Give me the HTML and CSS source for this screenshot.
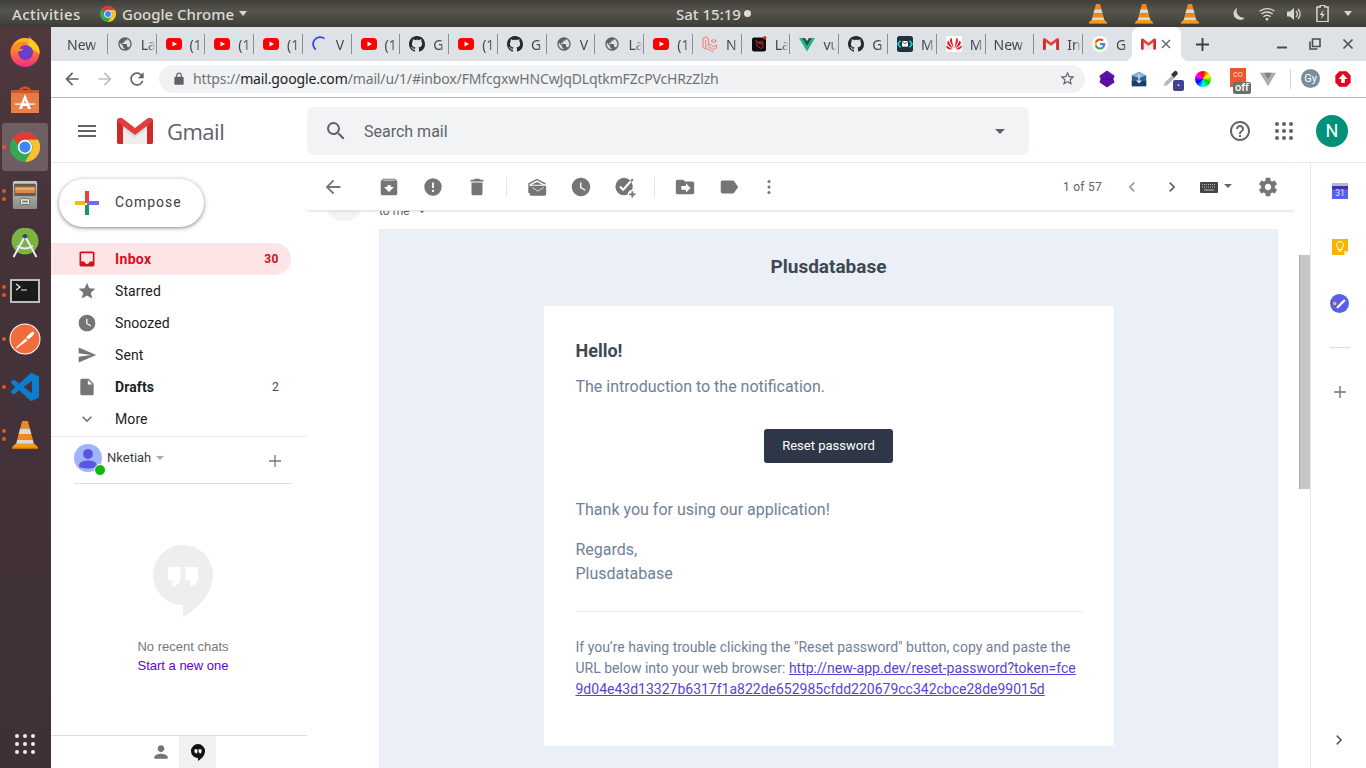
FILE: index.html
```html
<!DOCTYPE html>
<html lang="en">
<head>
<meta charset="utf-8">
<title>Inbox - Gmail</title>
<link rel="stylesheet" href="styles.css">
</head>
<body>
<svg class="sprite" xmlns="http://www.w3.org/2000/svg">
  <defs>
    <linearGradient id="ffbody" x1="0" y1="0" x2="0" y2="1"><stop offset="0" stop-color="#ffc21c"/><stop offset=".45" stop-color="#ff7a2a"/><stop offset="1" stop-color="#f2298a"/></linearGradient>
    <linearGradient id="bag" x1="0" y1="0" x2="0" y2="1"><stop offset="0" stop-color="#e5793f"/><stop offset="1" stop-color="#e9814a"/></linearGradient>
    <linearGradient id="cab" x1="0" y1="0" x2="0" y2="1"><stop offset="0" stop-color="#c9c9c4"/><stop offset="1" stop-color="#8b8b86"/></linearGradient>
  </defs>
  <symbol id="chrome" viewBox="0 0 48 48">
    <circle cx="24" cy="24" r="24" fill="#34a853"/>
    <path d="M44.8 12A24 24 0 0 1 24 48L34.4 30A12 12 0 0 0 24 12z" fill="#fbc02d"/>
    <path d="M24 0a24 24 0 0 1 20.8 12H24a12 12 0 0 0-11.3 8L4.6 9.9A24 24 0 0 1 24 0z" fill="#e53935"/>
    <circle cx="24" cy="24" r="11.5" fill="#fff"/><circle cx="24" cy="24" r="9" fill="#4285f4"/>
  </symbol>
  <symbol id="vlc" viewBox="0 0 30 32">
    <path d="M12 1h6l2.2 8H9.8z" fill="#f08a1d"/>
    <path d="M9.8 9h10.4l1.6 6H8.2z" fill="#d9d9d9"/>
    <path d="M8.2 15h13.6l1.6 6H6.6z" fill="#f08a1d"/>
    <path d="M6.6 21h16.8l1.2 5H5.4z" fill="#d9d9d9"/>
    <path d="M5.4 25h19.2l4 3.5v2.5H1.4v-2.5z" fill="#f39a1f"/>
    <path d="M1.4 29.5h27.2V31H1.4z" fill="#c96f10"/>
  </symbol>
  <symbol id="globe" viewBox="0 0 24 24"><path fill="#5f6368" d="M12 2C6.48 2 2 6.48 2 12s4.48 10 10 10 10-4.48 10-10S17.52 2 12 2zm-1 17.93c-3.95-.49-7-3.85-7-7.93 0-.62.08-1.21.21-1.79L9 15v1c0 1.1.9 2 2 2v1.93zm6.9-2.54c-.26-.81-1-1.39-1.9-1.39h-1v-3c0-.55-.45-1-1-1H8v-2h2c.55 0 1-.45 1-1V7h2c1.1 0 2-.9 2-2v-.41c2.93 1.19 5 4.06 5 7.41 0 2.08-.8 3.97-2.1 5.39z"/></symbol>
  <symbol id="yt" viewBox="0 0 16 16"><rect x="0" y="2" width="16" height="12" rx="3.5" fill="#f00"/><path d="M6.5 5.5v5L11 8z" fill="#fff"/></symbol>
  <symbol id="gh" viewBox="0 0 16 16"><path fill="#24292e" d="M8 0C3.58 0 0 3.58 0 8c0 3.54 2.29 6.53 5.47 7.59.4.07.55-.17.55-.38 0-.19-.01-.82-.01-1.49-2.01.37-2.53-.49-2.69-.94-.09-.23-.48-.94-.82-1.13-.28-.15-.68-.52-.01-.53.63-.01 1.08.58 1.23.82.72 1.21 1.87.87 2.33.66.07-.52.28-.87.51-1.07-1.78-.2-3.64-.89-3.64-3.95 0-.87.31-1.59.82-2.15-.08-.2-.36-1.02.08-2.12 0 0 .67-.21 2.2.82.64-.18 1.32-.27 2-.27.68 0 1.36.09 2 .27 1.53-1.04 2.2-.82 2.2-.82.44 1.1.16 1.92.08 2.12.51.56.82 1.27.82 2.15 0 3.07-1.87 3.75-3.65 3.95.29.25.54.73.54 1.48 0 1.07-.01 1.93-.01 2.2 0 .21.15.46.55.38A8.013 8.013 0 0 0 16 8c0-4.42-3.58-8-8-8z"/></symbol>
  <symbol id="laravel" viewBox="0 0 16 16"><path fill="none" stroke="#f0706a" stroke-width=".9" d="M1 2.5l2.7-1.5 2.7 1.5v8l5.3 3 2.8-1.6V9l-2.8 1.6L6.4 7.5M3.7 4V12l8 4M1 2.5v9l2.7 1.5M11.7 3.5l2.8 1.5-2.8 1.6L9 5z"/></symbol>
  <symbol id="laraveld" viewBox="0 0 16 16"><rect x="1" y="1.500" width="14" height="14" rx="2" fill="#0d0d0d"/><path fill="none" stroke="#c0282d" stroke-width="1" d="M4 4.500l2 1v4.500l4 2.500 2-1.200V7l-2 1.200L6 6M10 5l2 1.200-2 1.200-2-1.200z"/><circle cx="13.800" cy="1.800" r="1.800" fill="#ea2a2a"/></symbol>
  <symbol id="vue" viewBox="0 0 16 16"><path fill="#17b978" d="M0 2h3.200L8 10.200 12.800 2H16L8 15.500z"/><path fill="#27495a" d="M3.200 2h2.900L8 5.300 9.900 2h2.900L8 10.200z"/></symbol>
  <symbol id="mailapp" viewBox="0 0 16 16"><rect width="16" height="16" rx="2.500" fill="#20323f"/><path d="M5 5h6v5.600H5z" fill="#fff"/><path d="M5 5.400l3 2.400 3-2.400" fill="none" stroke="#20323f" stroke-width=".8"/><path d="M3.400 4.600L1 8l2.400 3.400M12.600 4.600L15 8l-2.400 3.400" fill="none" stroke="#19d4de" stroke-width="1.600"/></symbol>
  <symbol id="huawei" viewBox="0 0 16 16"><rect width="16" height="16" fill="#fff"/><g fill="#e3161f" transform="translate(-1.600 -2.200) scale(1.200)"><path d="M7.600 12.200L6 3.200c-1.600.6-1.700 2.800-.6 4.700z"/><path d="M8.400 12.200L10 3.200c1.600.6 1.700 2.800.6 4.700z"/><path d="M7 12.400L3.200 5.600c-1.500 1.400-.9 3.400 1 4.800z"/><path d="M9 12.400l3.800-6.800c1.500 1.400.9 3.400-1 4.800z"/><path d="M6.600 12.800L1.600 9.800c-.4 1.600 1 3 3 3.200z"/><path d="M9.400 12.800l5-3c.4 1.600-1 3-3 3.200z"/></g></symbol>
  <symbol id="gmail" viewBox="0 0 36 26">
    <path d="M6 8l12 9 12-9v18H6z" fill="#eeeeee"/>
    <path d="M18 17L6 8v3l12 9 12-9V8z" fill="#dcdcdc"/>
    <path d="M0 2.500A2.500 2.500 0 0 1 2.500 0H5l13 10L31 0h2.500A2.500 2.500 0 0 1 36 2.500V24a2 2 0 0 1-2 2h-4V8l-12 9L6 8v18H2a2 2 0 0 1-2-2z" fill="#e23d3a"/>
    <path d="M30 8l6-5.500V24a2 2 0 0 1-2 2h-4zM6 8L0 2.500V24a2 2 0 0 0 2 2h4z" fill="#cf2a2a"/>
  </symbol>
  <symbol id="google" viewBox="0 0 24 24"><circle cx="12" cy="12" r="12" fill="#fff"/><g transform="translate(3.600 3.600) scale(.35)"><path fill="#ea4335" d="M24 9.500c3.500 0 6.700 1.200 9.200 3.600l6.800-6.800C35.900 2.400 30.500 0 24 0 14.600 0 6.500 5.400 2.600 13.200l8 6.200C12.400 13.700 17.700 9.500 24 9.500z"/><path fill="#4285f4" d="M46.900 24.500c0-1.600-.1-3.100-.4-4.500H24v9h12.900c-.6 3-2.200 5.500-4.800 7.200l7.700 6c4.500-4.200 7.100-10.300 7.100-17.700z"/><path fill="#fbbc05" d="M10.500 28.600A14.500 14.500 0 0 1 10.500 19.400l-8-6.200A24 24 0 0 0 2.600 34.800z"/><path fill="#34a853" d="M24 48c6.500 0 11.900-2.100 15.900-5.800l-7.700-6c-2.200 1.400-4.900 2.300-8.200 2.300-6.300 0-11.600-4.200-13.500-9.900l-8 6.200C6.500 42.600 14.600 48 24 48z"/></g></symbol>
  <symbol id="spin" viewBox="0 0 16 16"><path d="M12.500 2.600A7 7 0 0 0 3.800 13.600" fill="none" stroke="#3b46e0" stroke-width="1.800"/></symbol>
  <symbol id="bubble" viewBox="0 0 60 72"><path d="M30 0a30 30 0 1 0 0 60v12c16-9 30-24 30-42A30 30 0 0 0 30 0z" fill="currentColor"/><path d="M15 22h12.500v11c0 4.500-3.500 8-8 8.500v-6H15zM32.500 22H45v11c0 4.500-3.500 8-8 8.500v-6h-4.500z" fill="#fff"/></symbol>
</svg>

<header class="topbar">
  <span class="tb-activities">Activities</span>
  <svg class="tb-chrome"><use href="#chrome"/></svg>
  <span class="tb-app">Google Chrome</span>
  <span class="tb-caret"></span>
  <span class="tb-clock">Sat 15:19</span>
  <span class="tb-dot"></span>
  <svg class="tb-cone tb-cone-first"><use href="#vlc"/></svg>
  <svg class="tb-cone"><use href="#vlc"/></svg>
  <svg class="tb-cone"><use href="#vlc"/></svg>
  <svg class="tb-moon" viewBox="0 0 16 16"><path d="M6 .8a7.300 7.300 0 1 0 8.600 11.400A8 8 0 0 1 6 .8z" fill="#d8d8d2"/></svg>
  <svg class="tb-wifi" viewBox="0 0 16 16"><path d="M8 15l-1.800-2.200a2.800 2.800 0 0 1 3.600 0z" fill="#e0e0da"/><path d="M4.400 10.800a5.600 5.600 0 0 1 7.200 0M2.400 8a8.800 8.800 0 0 1 11.200 0M.6 5.200a11.600 11.600 0 0 1 14.800 0" fill="none" stroke="#d8d8d2" stroke-width="1.300"/></svg>
  <svg class="tb-vol" viewBox="0 0 16 16"><path d="M1 5.500h3L8 2v12l-4-3.500H1z" fill="#d8d8d2"/><path d="M10 5a4 4 0 0 1 0 6M12 3a7 7 0 0 1 0 10" fill="none" stroke="#d8d8d2" stroke-width="1.300"/></svg>
  <svg class="tb-bat" viewBox="0 0 14 18"><path d="M4.500 0h5v2H13v16H1V2h3.500z" fill="none" stroke="#d8d8d2" stroke-width="1.600"/><path d="M8 5L4 10.500h2.500L5.500 15l4-5.500H7z" fill="#d8d8d2"/></svg>
  <span class="tb-caret tb-caret-end"></span>
</header>

<div class="desktop">
  <nav class="dock">
    <div class="dock-item">
      <svg class="d-31" viewBox="0 0 30 32"><circle cx="15" cy="17.500" r="14.500" fill="url(#ffbody)"/><path d="M19 0c1 4 5 6 8 10 2.500 3.500 2.800 7 2.500 9L17 10c3-2.500 3-6 2-10z" fill="#ffcb21"/><circle cx="15.500" cy="17.500" r="7.500" fill="#6b3ec6"/><path d="M3 12c3-4 7-5.500 12-5 2 .3 3 1 3 2.500-4-.5-7.500 1-8.500 4 1.500.5 3 .5 4 .5-.5 1.500-3 2.500-5.500 2.200C5.500 16 4 14.500 3 12z" fill="#ff8a1f"/></svg>
    </div>
    <div class="dock-item">
      <svg class="d-30" viewBox="0 0 30 30"><path d="M9 7c0-6 12-6 12 0v3h-2.500V7c0-3-7-3-7 0v3H9z" fill="#c9582a"/><path d="M1 6h28v23H1z" fill="url(#bag)"/><path d="M1 6h28v3H1z" fill="#c9582a"/><path d="M15 10l6 15h-3l-1-3h-4l-1 3H9zm0 6l-1.200 3.500h2.400z" fill="#fff"/><path d="M5 19.500h20v1.200H5z" fill="#fff"/></svg>
    </div>
    <div class="dock-item dock-active">
      <span class="dock-dots"><i></i></span>
      <svg class="d-30"><use href="#chrome"/></svg>
    </div>
    <div class="dock-item">
      <span class="dock-dots"><i></i><i></i></span>
      <svg class="d-28" viewBox="0 0 28 30"><rect x="1" y="0" width="26" height="30" rx="2" fill="url(#cab)"/><rect x="2.500" y="3" width="23" height="13" fill="#5a5a56"/><rect x="3.500" y="6" width="21" height="7" fill="#e2853f"/><path d="M3.500 8.500h21" stroke="#f7d7b8" stroke-width="1"/><rect x="9" y="19" width="10" height="6" rx="1" fill="#eee" stroke="#666"/><rect x="11" y="21" width="6" height="2" fill="#777"/></svg>
    </div>
    <div class="dock-item">
      <svg class="d-30" viewBox="0 0 30 30"><circle cx="15" cy="13" r="13.500" fill="#7cb342"/><circle cx="15" cy="8.500" r="2.500" fill="#37474f"/><path d="M14 10L3.500 29M16 10l10.500 19M7 18c5 3 11 3 16 0" fill="none" stroke="#eef" stroke-width="2"/></svg>
    </div>
    <div class="dock-item">
      <span class="dock-dots"><i></i><i></i></span>
      <svg class="d-30" viewBox="0 0 30 24"><rect width="30" height="24" fill="#bdbdb8"/><rect x="2" y="2" width="26" height="20" fill="#1b1b1b"/><path d="M6 5l4 3-4 3M11 11h6" fill="none" stroke="#eee" stroke-width="1.200"/></svg>
    </div>
    <div class="dock-item">
      <span class="dock-dots"><i></i></span>
      <svg class="d-32" viewBox="0 0 32 32"><circle cx="16" cy="16" r="15.500" fill="#fff"/><circle cx="16" cy="16" r="14.500" fill="#f26b3a"/><path d="M6.500 25l10-9.500 2 2-11 8zM17 14.500l5-5c2-2 4.500 0 2.500 2.500l-5 4.500z" fill="#fff"/></svg>
    </div>
    <div class="dock-item">
      <span class="dock-dots"><i></i></span>
      <svg class="d-28" viewBox="0 0 24 24"><path fill="#0a7fcf" d="M23.150 2.587L18.210.21a1.494 1.494 0 0 0-1.705.29l-9.460 8.630-4.120-3.128a.999.999 0 0 0-1.276.057L.327 7.261A1 1 0 0 0 .326 8.740L3.899 12 .326 15.260a1 1 0 0 0 .001 1.479L1.650 17.940a.999.999 0 0 0 1.276.057l4.120-3.128 9.460 8.630a1.492 1.492 0 0 0 1.704.29l4.942-2.377A1.500 1.500 0 0 0 24 20.060V3.939a1.500 1.500 0 0 0-.85-1.352zm-5.146 14.861L10.826 12l7.178-5.448v10.896z"/></svg>
    </div>
    <div class="dock-item">
      <span class="dock-dots"><i></i><i></i></span>
      <svg class="d-30"><use href="#vlc"/></svg>
    </div>
    <div class="dock-apps"><i></i><i></i><i></i><i></i><i></i><i></i><i></i><i></i><i></i></div>
  </nav>

  <div class="browser">
    <div class="tabstrip">
      <div class="tab tab-plain"><span class="tab-title tab-title-wide">New</span></div>
      <div class="tab"><svg class="fav"><use href="#globe"/></svg><span class="tab-title">La</span></div>
      <div class="tab"><svg class="fav"><use href="#yt"/></svg><span class="tab-title">(1</span></div>
      <div class="tab"><svg class="fav"><use href="#yt"/></svg><span class="tab-title">(1</span></div>
      <div class="tab"><svg class="fav"><use href="#yt"/></svg><span class="tab-title">(1</span></div>
      <div class="tab"><svg class="fav"><use href="#spin"/></svg><span class="tab-title">V</span></div>
      <div class="tab"><svg class="fav"><use href="#yt"/></svg><span class="tab-title">(1</span></div>
      <div class="tab"><svg class="fav"><use href="#gh"/></svg><span class="tab-title">G</span></div>
      <div class="tab"><svg class="fav"><use href="#yt"/></svg><span class="tab-title">(1</span></div>
      <div class="tab"><svg class="fav"><use href="#gh"/></svg><span class="tab-title">G</span></div>
      <div class="tab"><svg class="fav"><use href="#globe"/></svg><span class="tab-title">V</span></div>
      <div class="tab"><svg class="fav"><use href="#globe"/></svg><span class="tab-title">La</span></div>
      <div class="tab"><svg class="fav"><use href="#yt"/></svg><span class="tab-title">(1</span></div>
      <div class="tab"><svg class="fav"><use href="#laravel"/></svg><span class="tab-title">N</span></div>
      <div class="tab"><svg class="fav"><use href="#laraveld"/></svg><span class="tab-title">La</span></div>
      <div class="tab"><svg class="fav"><use href="#vue"/></svg><span class="tab-title">vu</span></div>
      <div class="tab"><svg class="fav"><use href="#gh"/></svg><span class="tab-title">G</span></div>
      <div class="tab"><svg class="fav"><use href="#mailapp"/></svg><span class="tab-title">M</span></div>
      <div class="tab"><svg class="fav"><use href="#huawei"/></svg><span class="tab-title">M</span></div>
      <div class="tab tab-plain"><span class="tab-title tab-title-wide">New</span></div>
      <div class="tab"><svg class="fav"><use href="#gmail"/></svg><span class="tab-title">In</span></div>
      <div class="tab tab-nosep"><svg class="fav"><use href="#google"/></svg><span class="tab-title">G</span></div>
      <div class="tab tab-active"><svg class="fav"><use href="#gmail"/></svg><svg class="tab-x" viewBox="0 0 10 10"><path d="M1 1l8 8M9 1L1 9" stroke="#5f6368" stroke-width="1.400"/></svg></div>
      <svg class="newtab" viewBox="0 0 14 14"><path d="M7 0v14M0 7h14" stroke="#3c4043" stroke-width="2"/></svg>
      <div class="winctl">
        <svg viewBox="0 0 12 12"><path d="M1 9.500h10" stroke="#4a4d52" stroke-width="2"/></svg>
        <svg viewBox="0 0 12 12"><path d="M3.500 1h7.500v7.500H3.500z M1 3.500v7.500h7.500" fill="none" stroke="#4a4d52" stroke-width="1.600"/></svg>
        <svg viewBox="0 0 12 12"><path d="M1.500 1.500l9 9M10.500 1.500l-9 9" stroke="#4a4d52" stroke-width="1.600"/></svg>
      </div>
    </div>

    <div class="toolbar">
      <svg class="nav-i" viewBox="0 0 24 24"><path fill="#5f6368" d="M20 11H7.830l5.590-5.590L12 4l-8 8 8 8 1.410-1.410L7.830 13H20v-2z"/></svg>
      <svg class="nav-i nav-fwd" viewBox="0 0 24 24"><path fill="#bcbec1" d="M12 4l-1.410 1.410L16.170 11H4v2h12.170l-5.580 5.590L12 20l8-8z"/></svg>
      <svg class="nav-i" viewBox="0 0 24 24"><path fill="#5f6368" d="M17.650 6.350A7.958 7.958 0 0 0 12 4c-4.420 0-7.990 3.580-7.990 8s3.570 8 7.990 8c3.730 0 6.840-2.550 7.730-6h-2.080A5.990 5.990 0 0 1 12 18c-3.310 0-6-2.690-6-6s2.690-6 6-6c1.660 0 3.140.690 4.220 1.780L13 11h7V4l-2.350 2.350z"/></svg>
      <div class="omnibox">
        <svg class="lock" viewBox="0 0 24 24"><path fill="#5f6368" d="M18 8h-1V6c0-2.760-2.240-5-5-5S7 3.240 7 6v2H6c-1.100 0-2 .9-2 2v10c0 1.100.9 2 2 2h12c1.100 0 2-.9 2-2V10c0-1.100-.9-2-2-2zM9 6c0-1.660 1.340-3 3-3s3 1.340 3 3v2H9V6z"/></svg>
        <span class="url"><span class="url-dim">https://</span><span class="url-host">mail.google.com</span><span class="url-dim">/mail/u/1/#inbox/FMfcgxwHNCwJqDLqtkmFZcPVcHRzZlzh</span></span>
        <svg class="omni-star" viewBox="0 0 24 24"><path fill="#5f6368" d="M22 9.240l-7.190-.62L12 2 9.190 8.630 2 9.240l5.460 4.730L5.820 21 12 17.270 18.180 21l-1.630-7.030L22 9.240zM12 15.400l-3.760 2.270 1-4.280-3.320-2.880 4.380-.38L12 6.100l1.710 4.040 4.380.38-3.320 2.880 1 4.280L12 15.400z"/></svg>
      </div>
      <div class="exts">
        <svg class="ext" viewBox="0 0 20 20"><path d="M10 .5l8.500 6-1.500 3.500 1.500 3.500-8.500 6-8.500-6L3 10 1.500 6.500z" fill="#5a12a8"/><path d="M3 10h14" stroke="#3f0b7a"/></svg>
        <svg class="ext" viewBox="0 0 20 20"><path d="M2 6l8-4 8 4v12H2z" fill="#2f5f93"/><path d="M2 6l8-4 8 4-8 3z" fill="#8db4d8"/><path d="M2 12h16v6H2z" fill="#1b3f68"/><path d="M10 5v9m-2.500-2.500L10 14l2.500-2.500" fill="none" stroke="#d8ecff" stroke-width="1.300"/></svg>
        <span class="ext ext-drop"><svg viewBox="0 0 20 20"><path d="M2 18l1-4 8-8 3 3-8 8z" fill="#b6b9c9"/><path d="M10 5l4-4c1.500-.7 4 1.500 3.500 3.500l-4 4z" fill="#35373f"/></svg><b>.</b></span>
        <span class="ext ext-wheel"></span>
        <span class="ext ext-co"><span class="co-box">co</span><span class="co-off">off</span></span>
        <svg class="ext" viewBox="0 0 20 20"><path d="M1 3h18L10 18z" fill="#a9abad"/><path d="M6 3h8l-4 7z" fill="#7d7f82"/></svg>
        <span class="ext-sep"></span>
        <span class="ext-gy">Gy</span>
        <svg class="ext ext-up" viewBox="0 0 20 20"><path d="M6 1.500h8L18.500 6v8L14 18.500H6L1.500 14V6z" fill="#e6001f"/><path d="M10 4.500l5 5.500h-3v4.500H8V10H5z" fill="#fff"/></svg>
      </div>
    </div>

    <div class="gmail">
      <div class="gm-header">
        <div class="gm-brand">
          <svg class="gm-menu" viewBox="0 0 24 24"><path fill="#5f6368" d="M3 18h18v-2H3v2zm0-5h18v-2H3v2zm0-7v2h18V6H3z"/></svg>
          <svg class="gm-logo"><use href="#gmail"/></svg>
          <span class="gm-word">Gmail</span>
        </div>
        <div class="search">
          <svg class="search-i" viewBox="0 0 24 24"><path fill="#5f6368" d="M15.500 14h-.79l-.28-.27A6.471 6.471 0 0 0 16 9.500 6.500 6.500 0 1 0 9.500 16c1.610 0 3.090-.59 4.230-1.570l.27.28v.79l5 4.990L20.490 19l-4.990-5zm-6 0C7.010 14 5 11.990 5 9.500S7.010 5 9.500 5 14 7.010 14 9.500 11.990 14 9.500 14z"/></svg>
          <span class="search-text">Search mail</span>
          <span class="search-caret"></span>
        </div>
        <div class="gm-right">
          <svg class="gm-i" viewBox="0 0 24 24"><path fill="#5f6368" d="M11 18h2v-2h-2v2zm1-16C6.480 2 2 6.480 2 12s4.480 10 10 10 10-4.480 10-10S17.520 2 12 2zm0 18c-4.410 0-8-3.590-8-8s3.590-8 8-8 8 3.590 8 8-3.590 8-8 8zm0-14c-2.210 0-4 1.790-4 4h2c0-1.100.9-2 2-2s2 .9 2 2c0 2-3 1.750-3 5h2c0-2.250 3-2.500 3-5 0-2.210-1.790-4-4-4z"/></svg>
          <svg class="gm-i" viewBox="0 0 24 24"><g fill="#5f6368"><circle cx="5" cy="5" r="2"/><circle cx="12" cy="5" r="2"/><circle cx="19" cy="5" r="2"/><circle cx="5" cy="12" r="2"/><circle cx="12" cy="12" r="2"/><circle cx="19" cy="12" r="2"/><circle cx="5" cy="19" r="2"/><circle cx="12" cy="19" r="2"/><circle cx="19" cy="19" r="2"/></g></svg>
          <span class="gm-avatar">N</span>
        </div>
      </div>

      <div class="gm-body">
        <aside class="sidebar">
          <button class="compose">
            <svg class="compose-plus" viewBox="0 0 24 24"><path d="M10 0h4v12h-4z" fill="#ea4335"/><path d="M12 10h12v4H12z" fill="#6c6cf5"/><path d="M10 14h4v10h-4z" fill="#0f9d58"/><path d="M0 10h10v4H0z" fill="#fbbc04"/></svg>
            <span>Compose</span>
          </button>
          <ul class="labels">
            <li class="label label-active"><svg class="label-i" viewBox="0 0 24 24"><path d="M19 3H5c-1.100 0-2 .9-2 2v14c0 1.100.9 2 2 2h14c1.100 0 2-.9 2-2V5c0-1.100-.9-2-2-2zm0 12h-4c0 1.660-1.350 3-3 3s-3-1.340-3-3H5V5h14v10z"/></svg><span class="label-name">Inbox</span><span class="label-count">30</span></li>
            <li class="label"><svg class="label-i" viewBox="0 0 24 24"><path d="M12 17.270L18.180 21l-1.640-7.030L22 9.240l-7.190-.61L12 2 9.190 8.630 2 9.240l5.460 4.730L5.820 21z"/></svg><span class="label-name">Starred</span></li>
            <li class="label"><svg class="label-i" viewBox="0 0 24 24"><path d="M11.990 2C6.470 2 2 6.480 2 12s4.470 10 9.990 10C17.520 22 22 17.520 22 12S17.520 2 11.990 2zm4.250 14.200L11 13V7h1.500v5.200l4.500 2.670-.76 1.330z"/></svg><span class="label-name">Snoozed</span></li>
            <li class="label"><svg class="label-i" viewBox="0 0 24 24"><path d="M2.010 21L23 12 2.010 3 2 10l15 2-15 2z"/></svg><span class="label-name">Sent</span></li>
            <li class="label label-bold"><svg class="label-i" viewBox="0 0 24 24"><path d="M6 2c-1.100 0-1.990.9-1.990 2L4 20c0 1.100.89 2 1.990 2H18c1.100 0 2-.9 2-2V8l-6-6H6zm7 7V3.500L18.500 9H13z"/></svg><span class="label-name">Drafts</span><span class="label-count">2</span></li>
            <li class="label"><svg class="label-i" viewBox="0 0 24 24"><path d="M16.590 8.590L12 13.170 7.410 8.590 6 10l6 6 6-6z"/></svg><span class="label-name">More</span></li>
          </ul>
          <div class="hangouts">
            <div class="hg-user">
              <span class="hg-avatar"><svg viewBox="0 0 28 28"><circle cx="14" cy="10" r="5" fill="#5b55e0"/><path d="M5 22c0-4 4-5.500 9-5.500s9 1.500 9 5.500c0 1.500-4 2.500-9 2.500s-9-1-9-2.500z" fill="#5b55e0"/></svg><i class="hg-online"></i></span>
              <span class="hg-name">Nketiah</span>
              <span class="hg-caret"></span>
              <svg class="hg-plus" viewBox="0 0 12 12"><path d="M6 0v12M0 6h12" stroke="#777" stroke-width="1.300"/></svg>
            </div>
            <div class="hg-empty">
              <svg class="hg-bubble"><use href="#bubble"/></svg>
              <p class="hg-none">No recent chats</p>
              <a class="hg-start">Start a new one</a>
            </div>
            <div class="hg-tabs">
              <span class="hg-tab"><svg viewBox="0 0 24 24"><path fill="#757575" d="M12 12c2.210 0 4-1.790 4-4s-1.790-4-4-4-4 1.790-4 4 1.790 4 4 4zm0 2c-2.670 0-8 1.340-8 4v2h16v-2c0-2.660-5.330-4-8-4z"/></svg></span>
              <span class="hg-tab hg-tab-on"><svg class="hg-tab-bubble"><use href="#bubble"/></svg></span>
            </div>
          </div>
        </aside>

        <main class="pane">
          <div class="reader">
            <div class="actions">
              <button class="act act-back"><svg viewBox="0 0 24 24"><path d="M20 11H7.830l5.590-5.590L12 4l-8 8 8 8 1.410-1.410L7.830 13H20v-2z"/></svg></button>
              <button class="act act-first"><svg viewBox="0 0 24 24"><path d="M20.540 5.230l-1.390-1.680C18.880 3.210 18.470 3 18 3H6c-.47 0-.88.21-1.160.55L3.460 5.230C3.170 5.570 3 6.020 3 6.500V19c0 1.100.9 2 2 2h14c1.100 0 2-.9 2-2V6.500c0-.48-.17-.93-.46-1.270zM12 17.500L6.500 12H10v-2h4v2h3.500L12 17.500zM5.120 5l.81-1h12l.94 1H5.120z"/></svg></button>
              <button class="act"><svg viewBox="0 0 24 24"><path d="M12 2.500a9.500 9.500 0 1 0 0 19 9.500 9.500 0 0 0 0-19zm0 15a1.300 1.300 0 1 1 0-2.600 1.300 1.300 0 0 1 0 2.600zm1-4.500h-2V7h2z"/></svg></button>
              <button class="act"><svg viewBox="0 0 24 24"><path d="M6 19c0 1.100.9 2 2 2h8c1.100 0 2-.9 2-2V7H6v12zM19 4h-3.500l-1-1h-5l-1 1H5v2h14V4z"/></svg></button>
              <span class="act-sep"></span>
              <button class="act act-first-small"><svg viewBox="0 0 24 24"><path d="M12 3L2.500 8v10.500H4V9l8-4.300L20 9h1.500v-1zM6 9.500l6-3 6 3zM5.500 10.500h15c.8 0 1.500.7 1.500 1.500v8c0 .8-.7 1.500-1.500 1.500h-15c-.8 0-1.500-.7-1.500-1.500v-8c0-.8.700-1.500 1.500-1.500zm7.500 6.500l6.500-4.200V12l-6.500 4-6.500-4v.8z"/></svg></button>
              <button class="act"><svg viewBox="0 0 24 24"><path d="M11.990 2C6.470 2 2 6.480 2 12s4.470 10 9.990 10C17.520 22 22 17.520 22 12S17.520 2 11.990 2zm4.250 14.200L11 13V7h1.500v5.200l4.500 2.670-.76 1.330z"/></svg></button>
              <button class="act"><svg viewBox="0 0 24 24"><circle cx="11" cy="11.500" r="9.500"/><path d="M6.500 11.500l3.500 3.500 8.500-9.500" class="task-check"/><path d="M20.500 3.500l-2 2.300" class="task-tail"/><circle cx="20" cy="20" r="5" class="task-halo"/><path d="M19 16.500h2v2.500h2.500v2H21v2.500h-2V21h-2.500v-2H19z"/></svg></button>
              <span class="act-sep"></span>
              <button class="act act-first-small"><svg viewBox="0 0 24 24"><path d="M10 4H4c-1.100 0-1.990.9-1.990 2L2 18c0 1.100.9 2 2 2h16c1.100 0 2-.9 2-2V8c0-1.100-.9-2-2-2h-8zm3 14v-3H8v-4h5V8l5 5z"/></svg></button>
              <button class="act"><svg viewBox="0 0 24 24"><path d="M17.630 5.840C17.270 5.330 16.670 5 16 5L5 5.010C3.900 5.010 3 5.900 3 7v10c0 1.100.9 1.990 2 1.990L16 19c.67 0 1.270-.33 1.630-.84L22 12l-4.370-6.160z"/></svg></button>
              <button class="act act-more"><svg viewBox="0 0 24 24"><circle cx="12" cy="5.500" r="1.800"/><circle cx="12" cy="12" r="1.800"/><circle cx="12" cy="18.500" r="1.800"/></svg></button>
              <span class="pager">1 of 57</span>
              <button class="pg pg-off"><svg viewBox="0 0 24 24"><path d="M15.410 7.410L14 6l-6 6 6 6 1.410-1.410L10.830 12z"/></svg></button>
              <button class="pg"><svg viewBox="0 0 24 24"><path d="M10 6L8.590 7.410 13.170 12l-4.580 4.590L10 18l6-6z"/></svg></button>
              <span class="kbd"><svg viewBox="0 0 18 11"><rect width="18" height="11" rx="1" fill="#444"/><path d="M2 2.500h14M2 5h14" stroke="#bbb" stroke-width="1" stroke-dasharray="1 1"/><path d="M4 8h10" stroke="#bbb"/></svg><i></i></span>
              <button class="act act-gear"><svg viewBox="0 0 24 24"><path d="M19.430 12.980c.04-.32.07-.64.07-.98s-.03-.66-.07-.98l2.110-1.650c.19-.15.24-.42.12-.64l-2-3.460c-.12-.22-.39-.3-.61-.22l-2.490 1c-.52-.4-1.080-.73-1.690-.98l-.38-2.650C14.460 2.180 14.250 2 14 2h-4c-.25 0-.46.18-.49.42l-.38 2.650c-.61.25-1.170.59-1.690.98l-2.490-1c-.23-.09-.49 0-.61.22l-2 3.460c-.13.22-.07.49.12.64l2.110 1.650c-.04.32-.07.65-.07.98s.03.66.07.98l-2.110 1.650c-.19.15-.24.42-.12.64l2 3.460c.12.22.39.3.61.22l2.490-1c.52.4 1.080.73 1.690.98l.38 2.650c.03.24.24.42.49.42h4c.25 0 .46-.18.49-.42l.38-2.650c.61-.25 1.170-.59 1.690-.98l2.490 1c.23.09.49 0 .61-.22l2-3.460c.12-.22.07-.49-.12-.64l-2.110-1.650zM12 15.500c-1.930 0-3.500-1.570-3.500-3.500s1.570-3.500 3.500-3.500 3.500 1.570 3.500 3.500-1.570 3.500-3.500 3.500z"/></svg></button>
            </div>
            <div class="msg-head">
              <span class="msg-avatar"></span>
              <span class="msg-to">to me</span>
              <span class="msg-caret"></span>
            </div>
            <div class="mail">
              <div class="mail-brand">Plusdatabase</div>
              <div class="mail-card">
                <h1 class="mail-h">Hello!</h1>
                <p class="mail-p">The introduction to the notification.</p>
                <a class="mail-btn">Reset password</a>
                <p class="mail-p mail-thanks">Thank you for using our application!</p>
                <p class="mail-p mail-regards">Regards,<br>Plusdatabase</p>
                <div class="mail-sub">If you’re having trouble clicking the "Reset password" button, copy and paste the<br>URL below into your web browser: <a class="mail-link">http://new-app.dev/reset-password?token=fce<br>9d04e43d13327b6317f1a822de652985cfdd220679cc342cbce28de99015d</a></div>
              </div>
            </div>
          </div>
          <div class="scrollbar"><span class="thumb"></span></div>
        </main>

        <aside class="addons">
          <span class="addon"><svg class="addon-i" viewBox="0 0 16 16"><path d="M0 0h16v4H0z" fill="#b9b9c4"/><path d="M0 3h16v13H0z" fill="#5b5fee"/><path d="M0 3h16v3.500H0z" fill="#3a35b8"/><text x="8" y="13" class="cal-num">31</text></svg></span>
          <span class="addon"><svg class="addon-i" viewBox="0 0 16 16"><path d="M0 0h16v12l-4 4H0z" fill="#f4b400"/><path d="M12 16v-4h4z" fill="#fbe8a6"/><path d="M8 2.500a3.500 3.500 0 0 0-2 6.300V10.500h4V8.800a3.500 3.500 0 0 0-2-6.300zM6.500 12h3" fill="none" stroke="#fff" stroke-width="1"/></svg></span>
          <span class="addon"><svg class="addon-i addon-tasks" viewBox="0 0 20 20"><circle cx="10" cy="10" r="10" fill="#5a5fe6"/><circle cx="5" cy="10" r="1.800" fill="#fbc02d"/><path d="M8 14l7-7" stroke="#fff" stroke-width="2.400" stroke-linecap="round"/></svg></span>
          <span class="addon-line"></span>
          <svg class="addon-plus" viewBox="0 0 12 12"><path d="M6 0v12M0 6h12" stroke="#777" stroke-width="1.400"/></svg>
          <svg class="addon-chev" viewBox="0 0 24 24"><path fill="#5f6368" d="M10 6L8.590 7.410 13.170 12l-4.580 4.590L10 18l6-6z"/></svg>
        </aside>
      </div>
    </div>
  </div>
</div>
</body>
</html>
```

FILE: styles.css
```css
* { box-sizing: border-box; }
html, body { margin: 0; padding: 0; }
body {
  width: 1366px; height: 768px; overflow: hidden;
  display: flex; flex-direction: column;
  font-family: Roboto, "Noto Sans", sans-serif;
  background: #fff;
}
svg { display: block; flex: none; }
button { border: 0; background: none; padding: 0; font: inherit; }
ul { list-style: none; margin: 0; padding: 0; }
p, h1 { margin: 0; }
.sprite { width: 0; height: 0; position: absolute; }

/* GNOME top bar */
.topbar {
  height: 27px; flex: none; display: flex; align-items: center;
  background: linear-gradient(#3f3e3a, #56544d 40%, #46453f 80%, #3a3935);
  color: #dcdcd6; font-family: "Noto Sans", sans-serif; font-size: 15px; font-weight: 500;
}
.tb-activities { margin-left: 12px; width: 70px; letter-spacing: .4px; }
.tb-chrome { width: 16px; height: 16px; margin-left: 18px; }
.tb-app { margin-left: 6px; width: 113px; white-space: nowrap; }
.tb-caret { width: 0; height: 0; border: 4.5px solid transparent; border-top: 5px solid #d8d8d2; border-bottom: 0; margin-left: 4px; }
.tb-clock { margin-left: 429px; width: 66px; white-space: nowrap; }
.tb-dot { width: 7px; height: 7px; border-radius: 50%; background: #dcdcd6; margin-left: 2px; }
.tb-cone { width: 20px; height: 22px; margin-left: 26px; }
.tb-cone-first { margin-left: 337px; }
.tb-moon { width: 14px; height: 16px; margin-left: 32px; }
.tb-wifi { width: 16px; height: 16px; margin-left: 13px; }
.tb-vol { width: 16px; height: 16px; margin-left: 11px; }
.tb-bat { width: 13px; height: 17px; margin-left: 14px; }
.tb-caret-end { margin-left: 15px; }

.desktop { flex: 1; display: flex; min-height: 0; }

/* Dock */
.dock {
  width: 51px; flex: none; display: flex; flex-direction: column; align-items: flex-start;
  background: linear-gradient(#50383d, #45333a 30%, #3f3037);
}
.dock-item { width: 46px; height: 48px; margin-left: 2px; flex: none; display: flex; align-items: center; justify-content: center; position: relative; border-radius: 3px; }
.dock-active { background: rgba(255,255,255,.2); }
.dock-dots { position: absolute; left: 0; top: 0; bottom: 0; width: 4px; display: flex; flex-direction: column; justify-content: center; gap: 4px; }
.dock-dots i { width: 4px; height: 4px; border-radius: 50%; background: #e9541f; }
.d-30 { width: 30px; height: 30px; }
.d-31 { width: 30px; height: 32px; }
.d-28 { width: 28px; height: 28px; }
.d-32 { width: 32px; height: 32px; }
.dock-apps { margin: auto 0 14px 15px; width: 20px; display: grid; grid-template-columns: repeat(3, 4px); justify-content: space-between; row-gap: 4px; }
.dock-apps i { width: 4px; height: 4px; border-radius: 50%; background: #f0eeee; }

.browser { flex: 1; min-width: 0; display: flex; flex-direction: column; }

/* Tabs */
.tabstrip { height: 34px; flex: none; background: #dee1e6; display: flex; align-items: stretch; padding-left: 8px; position: relative; font-family: "Noto Sans", sans-serif; }
.tab { width: 48.77px; flex: none; height: 34px; display: flex; align-items: center; padding-left: 9px; position: relative; }
.tab::after { content: ""; position: absolute; right: 0; top: 7px; height: 20px; width: 1px; background: #8a8d91; }
.tab-plain { padding-left: 8px; }
.tab-nosep::after { display: none; }
.fav { width: 16px; height: 16px; }
.tab-title { margin-left: 8px; width: 17px; white-space: nowrap; font-size: 14px; color: #45474b; -webkit-mask-image: linear-gradient(90deg, #000 45%, transparent 90%); mask-image: linear-gradient(90deg, #000 45%, transparent 90%); }
.tab-title-wide { margin-left: 0; width: 33px; -webkit-mask-image: linear-gradient(90deg, #000 75%, transparent 100%); mask-image: linear-gradient(90deg, #000 75%, transparent 100%); }
.tab-active { background: #fff; border-radius: 8px 8px 0 0; }
.tab-active::after { display: none; }
.tab-active::before { content: ""; position: absolute; left: -8px; right: -8px; bottom: 0; height: 8px; z-index: 0;
  background:
    radial-gradient(circle at 0 0, #dee1e6 8px, #fff 8.5px) 0 0 / 8px 8px no-repeat,
    radial-gradient(circle at 100% 0, #dee1e6 8px, #fff 8.5px) 100% 0 / 8px 8px no-repeat; }
.tab-active .fav { position: relative; width: 15px; }
.tab-x { width: 10px; height: 10px; margin-left: 5px; position: relative; }
.newtab { width: 13px; height: 13px; align-self: center; margin-left: 15px; }
.winctl { margin-left: auto; align-self: center; display: flex; gap: 21px; padding-right: 12px; }
.winctl svg { width: 12px; height: 12px; }

/* Toolbar */
.toolbar { height: 37px; flex: none; display: flex; align-items: center; background: #fff; border-bottom: 1px solid #b9b9b9; padding-left: 11px; padding-bottom: 1px; }
.nav-i { width: 20px; height: 20px; margin-right: 13px; }
.nav-fwd { margin-right: 12px; }
.omnibox { width: 926px; height: 28px; margin-left: -1px; border-radius: 14px; background: #f0f2f3; display: flex; align-items: center; padding-left: 13px; font-family: "Noto Sans", sans-serif; }
.lock { width: 14px; height: 14px; }
.url { margin-left: 7px; font-size: 14px; white-space: nowrap; letter-spacing: -.14px; }
.url-dim { color: #6f7377; }
.url-host { color: #202124; }
.omni-star { width: 17px; height: 17px; margin-left: auto; margin-right: 9px; }
.exts { display: flex; align-items: center; margin-left: 13px; }
.ext { width: 18px; height: 18px; flex: none; margin-right: 14px; }
.ext-drop { position: relative; margin-right: 11px; width: 22px; }
.ext-drop svg { width: 18px; height: 18px; }
.ext-drop b { position: absolute; right: 0; bottom: -3px; width: 11px; height: 11px; border-radius: 2px; background: #43408f; color: #fff; font-size: 10px; line-height: 6px; text-align: center; }
.ext-wheel { width: 16px; height: 16px; border-radius: 50%; background: conic-gradient(#f00, #ff0, #0c0, #0ff, #00f, #f0f, #f00); margin-right: 19px; }
.ext-co { position: relative; width: 24px; height: 24px; margin-right: 5px; }
.co-box { position: absolute; left: 0; top: 1px; width: 16px; height: 19px; background: #f0542a; color: #ffd9c8; font-size: 9px; line-height: 12px; text-align: center; }
.co-off { position: absolute; left: 3px; bottom: -3px; width: 18px; height: 12px; border-radius: 2px; background: #6f6f6f; color: #fff; font-size: 11px; line-height: 12px; text-align: center; font-weight: 500; }
.ext-sep { width: 1px; height: 20px; background: #cfd1d3; margin-left: -1px; margin-right: 10px; }
.ext-gy { width: 19px; height: 19px; border-radius: 50%; background: #78909c; color: #fff; font-size: 11px; line-height: 19px; text-align: center; margin-right: 14px; }
.ext-up { margin: 0; }

/* Gmail */
.gmail { flex: 1; min-height: 0; display: flex; flex-direction: column; }
.gm-header { height: 65px; flex: none; display: flex; align-items: center; border-bottom: 1px solid #e8e8e8; padding-top: 2px; }
.gm-brand { width: 256px; flex: none; display: flex; align-items: center; padding-left: 24px; }
.gm-menu { width: 24px; height: 24px; }
.gm-logo { width: 36px; height: 26px; margin-left: 18px; }
.gm-word { margin-left: 14px; font-family: "Open Sans", sans-serif; font-size: 22px; color: #5f6368; letter-spacing: -.5px; }
.search { width: 722px; height: 48px; flex: none; border-radius: 8px; background: #f1f3f4; display: flex; align-items: center; padding-left: 17px; }
.search-i { width: 24px; height: 24px; }
.search-text { margin-left: 16px; font-size: 16px; color: #5f6368; }
.search-caret { width: 0; height: 0; margin-left: auto; margin-right: 24px; border: 5px solid transparent; border-top-color: #5f6368; border-bottom: 0; }
.gm-right { margin-left: auto; display: flex; align-items: center; gap: 20px; padding-right: 18px; }
.gm-i { width: 24px; height: 24px; }
.gm-avatar { width: 32px; height: 32px; border-radius: 50%; background: #00917a; color: #fff; font-size: 18px; line-height: 32px; text-align: center; }

.gm-body { flex: 1; min-height: 0; display: flex; }

/* Sidebar */
.sidebar { width: 256px; flex: none; display: flex; flex-direction: column; }
.compose { width: 145px; height: 48px; margin: 16px 0 16px 8px; border-radius: 24px; background: #fff; box-shadow: 0 1px 3px rgba(60,64,67,.45), 0 1px 5px 1px rgba(60,64,67,.2); display: flex; align-items: center; padding-left: 16px; font-size: 14px; font-weight: 400; color: #3c4043; letter-spacing: .95px; flex: none; }
.compose-plus { width: 24px; height: 24px; }
.compose span { margin-left: 16px; margin-top: -2px; }
.labels { width: 240px; flex: none; }
.label { height: 32px; display: flex; align-items: center; padding: 0 12px 0 26px; font-size: 14px; color: #202124; border-radius: 0 16px 16px 0; letter-spacing: .1px; }
.label-i { width: 20px; height: 20px; fill: #757575; }
.label-name { margin-left: 18px; }
.label-count { margin-left: auto; font-size: 12px; color: #444; letter-spacing: .2px; }
.label-bold .label-name { font-weight: 700; }
.label-active { background: #fee5e5; color: #d50e1f; font-weight: 700; letter-spacing: .35px; }
.label-active .label-i { fill: #d50e1f; }
.label-active .label-count { color: #d50e1f; font-weight: 700; letter-spacing: .5px; }
.hangouts { flex: 1; min-height: 0; display: flex; flex-direction: column; border-top: 1px solid #e8eaed; margin-top: 1px; }
.hg-user { height: 47px; flex: none; margin-left: 23px; width: 217px; border-bottom: 1px solid #e0e0e0; display: flex; align-items: center; padding-bottom: 4px; }
.hg-avatar { width: 28px; height: 28px; border-radius: 50%; background: #a0b4fa; position: relative; flex: none; }
.hg-avatar svg { width: 28px; height: 28px; }
.hg-online { position: absolute; right: -4px; bottom: -4px; width: 12px; height: 12px; border-radius: 50%; background: #0fb80f; border: 1.500px solid #fff; }
.hg-name { margin-left: 5px; font-size: 13px; color: #3c4043; margin-top: -1px; }
.hg-caret { width: 0; height: 0; margin-left: 5px; border: 4px solid transparent; border-top-color: #aaa; border-bottom: 0; }
.hg-plus { width: 12px; height: 12px; margin-left: auto; margin-right: 10px; margin-top: 6px; }
.hg-empty { flex: 1; min-height: 0; display: flex; flex-direction: column; align-items: center; font-family: "Liberation Sans", Arial, sans-serif; font-size: 13px; padding: 61px 0 0 8px; }
.hg-bubble { width: 60px; height: 72px; color: #eeeeee; }
.hg-none { margin-top: 22px; color: #777; line-height: 16px; }
.hg-start { margin-top: 3px; color: #6200d8; line-height: 16px; }
.hg-tabs { height: 33px; flex: none; border-top: 1px solid #e0e0e0; display: flex; justify-content: center; }
.hg-tab { width: 37px; display: flex; align-items: center; justify-content: center; }
.hg-tab svg { width: 20px; height: 20px; }
.hg-tab-on { background: #f1f1f1; }
.hg-tab svg.hg-tab-bubble { width: 14px; height: 17px; color: #111; }

/* Reading pane */
.pane { flex: 1; min-width: 0; display: flex; }
.reader { flex: 1; min-width: 0; display: flex; flex-direction: column; overflow: hidden; }
.actions { height: 48px; flex: none; width: 987px; display: flex; align-items: center; padding-left: 4px; padding-top: 1px; border-bottom: 1px solid #e6e6e6; box-shadow: 0 2px 2px -1px rgba(0,0,0,.08); position: relative; z-index: 1; background: #fff; }
.act { width: 44px; height: 44px; display: flex; align-items: center; justify-content: center; flex: none; }
.act svg { width: 22px; height: 22px; fill: #757575; overflow: visible; }
.act svg .task-check { fill: none; stroke: #fff; stroke-width: 2.200px; }
.act svg .task-tail { fill: none; stroke: #757575; stroke-width: 2.200px; }
.act svg .task-halo { fill: #fff; }
.act-first { margin-left: 12px; }
.act-first-small { margin-left: 8px; }
.act-sep { width: 1px; height: 20px; background: #e6e6e6; margin-left: 7px; flex: none; }
.act-more { width: 36px; }
.act-more svg { width: 20px; height: 20px; }
.pager { margin-left: auto; font-size: 12px; color: #5f6368; margin-right: 10px; white-space: nowrap; letter-spacing: .25px; }
.pg { width: 40px; height: 40px; display: flex; align-items: center; justify-content: center; flex: none; }
.pg svg { width: 20px; height: 20px; fill: #5f6368; }
.pg-off svg { fill: #9a9a9a; }
.kbd { width: 58px; display: flex; align-items: center; padding-left: 8px; flex: none; }
.kbd svg { width: 18px; height: 11px; }
.kbd i { width: 0; height: 0; margin-left: 6px; margin-top: -3px; border: 4px solid transparent; border-top-color: #666; border-bottom: 0; }
.act-gear { width: 36px; margin-right: 8px; }
.msg-head { height: 18px; flex: none; display: flex; overflow: hidden; padding-left: 17px; }
.msg-avatar { width: 40px; height: 40px; border-radius: 50%; background: #f1f3f4; margin-top: -30px; flex: none; }
.msg-to { margin-left: 15px; margin-top: -7px; font-size: 12px; line-height: 14px; color: #5f6368; }
.msg-caret { width: 0; height: 0; margin-left: 9px; margin-top: -1px; border: 3px solid transparent; border-top-color: #5f6368; border-bottom: 0; }
.mail { width: 899px; margin-left: 72px; flex: 1; min-height: 0; background: #ebf0f7; overflow: hidden; }
.mail-brand { padding: 25px 0 26px; font-size: 19px; line-height: 26px; font-weight: 700; color: #3d4852; text-align: center; }
.mail-card { width: 570px; margin-left: 165px; padding: 32px 31px 46px 31.500px; background: #fff; border-radius: 3px; }
.mail-h { font-size: 18px; line-height: 26px; font-weight: 700; color: #3d4852; margin-bottom: 11px; }
.mail-p { font-size: 16px; line-height: 24px; color: #718096; }
.mail-btn { display: block; width: 129px; height: 34px; margin: 30px 0 0 188.500px; background: #2d3748; border-radius: 3px; color: #fff; font-size: 13px; line-height: 34px; text-align: center; }
.mail-thanks { margin-top: 35px; }
.mail-regards { margin-top: 16px; padding-bottom: 25px; border-bottom: 1px solid #e8e5ef; }
.mail-sub { margin-top: 25px; font-size: 14px; line-height: 21px; color: #718096; white-space: nowrap; }
.mail-link { color: #5b3fd6; text-decoration: underline; }
.scrollbar { width: 11px; flex: none; padding-top: 92px; }
.thumb { display: block; width: 11px; height: 234px; background: #c6c6c6; border-left: 1px solid #a9a9a9; }

/* Add-ons rail */
.addons { width: 56px; flex: none; border-left: 1px solid #e8e8e8; display: flex; flex-direction: column; align-items: center; padding-left: 2px; }
.addon { height: 56px; flex: none; display: flex; align-items: center; justify-content: center; }
.addon-i { width: 16px; height: 16px; }
.addon-tasks { width: 19px; height: 19px; }
.cal-num { font-family: Roboto, sans-serif; font-size: 8.500px; fill: #e2e2ff; text-anchor: middle; }
.addon-line { width: 20px; height: 1px; background: #dadce0; margin-top: 16px; }
.addon-plus { width: 12px; height: 12px; margin-top: 38px; }
.addon-chev { width: 20px; height: 20px; margin: auto 2px 18px 0; }
```
